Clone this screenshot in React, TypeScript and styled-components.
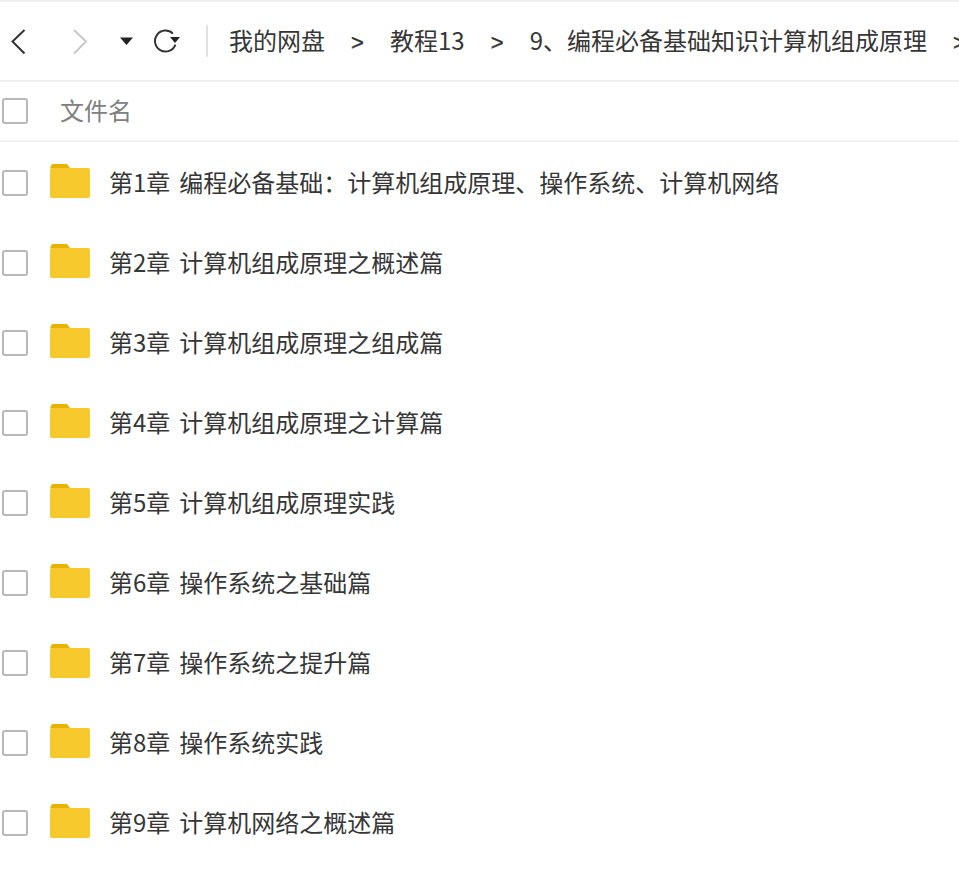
import React from 'react';
import styled, { createGlobalStyle } from 'styled-components';

const GlobalStyle = createGlobalStyle`
  html, body {
    margin: 0;
    padding: 0;
    background: #fff;
    overflow: hidden;
  }
  body {
    font-family: "Noto Sans CJK SC", "Liberation Sans", sans-serif;
  }
`;

const Page = styled.div`
  width: 959px;
  height: 879px;
  overflow: hidden;
  background: #fff;
`;

const Toolbar = styled.div`
  display: flex;
  align-items: center;
  height: 78px;
  border-top: 2px solid #f0f0f0;
  border-bottom: 2px solid #f0f0f0;
  overflow: hidden;
`;

const NavIcons = styled.div`
  display: flex;
  align-items: center;
  flex: none;
  width: 206px;
  height: 100%;
  padding-left: 10px;
  box-sizing: border-box;
`;

const IconSlot = styled.span<{ $width: number }>`
  display: flex;
  align-items: center;
  flex: none;
  width: ${p => p.$width}px;
`;

const Divider = styled.span`
  flex: none;
  width: 2px;
  height: 32px;
  background: #e2e2e2;
`;

const Crumbs = styled.div`
  display: flex;
  align-items: center;
  flex: none;
  gap: 26px;
  margin-left: 21px;
  padding-bottom: 2px;
  font-size: 24px;
  line-height: 32px;
  color: #363636;
  white-space: nowrap;
`;

const Sep = styled.span`
  padding-top: 6px;
  font-family: "Liberation Sans", sans-serif;
  font-size: 22px;
  -webkit-text-stroke: 0.4px #333;
  color: #333;
  width: 13px;
`;

const HeaderRow = styled.div`
  display: flex;
  align-items: center;
  height: 58px;
  border-bottom: 2px solid #f3f3f3;
`;

const HeaderLabel = styled.span`
  margin-left: 32px;
  padding-bottom: 2px;
  font-size: 24px;
  line-height: 32px;
  color: #808080;
`;

const Check = styled.span`
  display: block;
  flex: none;
  width: 26px;
  height: 26px;
  margin-left: 2px;
  border: 2px solid #b8b8b8;
  border-radius: 3px;
  box-sizing: border-box;
`;

const List = styled.div`
  display: flex;
  flex-direction: column;
  padding-top: 1px;
`;

const Row = styled.div`
  display: flex;
  align-items: center;
  height: 80px;
`;

const FolderWrap = styled.span`
  display: flex;
  flex: none;
  margin-left: 22px;
  margin-bottom: 4px;
`;

const Name = styled.span`
  margin-left: 19px;
  padding-bottom: 3px;
  font-size: 24px;
  line-height: 32px;
  word-spacing: 3.500px;
  color: #363636;
  white-space: nowrap;
`;

const Folder = () => (
  <svg width="40" height="34" viewBox="0 0 40 34">
    <path d="M2 0h15l3 4H0z" fill="#e8b400" />
    <rect y="4" width="40" height="30" rx="2" fill="#f8c92c" />
  </svg>
);

const BackIcon = () => (
  <svg width="20" height="28" viewBox="0 0 20 28" fill="none" stroke="#333" strokeWidth="2">
    <path d="M14.500 3 2.500 14.500l12 12" />
  </svg>
);

const ForwardIcon = () => (
  <svg width="20" height="28" viewBox="0 0 20 28" fill="none" stroke="#c8c8c8" strokeWidth="2">
    <path d="M4 3l12 11.500-12 12" />
  </svg>
);

const CaretIcon = () => (
  <svg width="14" height="10" viewBox="0 0 14 10">
    <path d="M0 1.500h13L6.500 9z" fill="#222" />
  </svg>
);

const RefreshIcon = () => (
  <svg width="28" height="26" viewBox="0 0 28 26" fill="none">
    <path d="M19.900 5.600A10.500 10.500 0 1 0 22.400 16.600" stroke="#333" strokeWidth="2" />
    <path d="M17 9h10l-5 6z" fill="#222" />
  </svg>
);

const chapters = [
  '第1章 编程必备基础\uFF1A计算机组成原理、操作系统、计算机网络',
  '第2章 计算机组成原理之概述篇',
  '第3章 计算机组成原理之组成篇',
  '第4章 计算机组成原理之计算篇',
  '第5章 计算机组成原理实践',
  '第6章 操作系统之基础篇',
  '第7章 操作系统之提升篇',
  '第8章 操作系统实践',
  '第9章 计算机网络之概述篇',
];

const App: React.FC = () => {
  return (
    <Page>
      <GlobalStyle />
      <Toolbar>
        <NavIcons>
          <IconSlot $width={60}><BackIcon /></IconSlot>
          <IconSlot $width={50}><ForwardIcon /></IconSlot>
          <IconSlot $width={33}><CaretIcon /></IconSlot>
          <IconSlot $width={30}><RefreshIcon /></IconSlot>
        </NavIcons>
        <Divider />
        <Crumbs>
          <span>我的网盘</span>
          <Sep>&gt;</Sep>
          <span>教程13</span>
          <Sep>&gt;</Sep>
          <span>9、编程必备基础知识计算机组成原理</span>
          <Sep>&gt;</Sep>
        </Crumbs>
      </Toolbar>
      <HeaderRow>
        <Check />
        <HeaderLabel>文件名</HeaderLabel>
      </HeaderRow>
      <List>
        {chapters.map(name => (
          <Row key={name}>
            <Check />
            <FolderWrap><Folder /></FolderWrap>
            <Name>{name}</Name>
          </Row>
        ))}
      </List>
    </Page>
  );
};

export default App;
